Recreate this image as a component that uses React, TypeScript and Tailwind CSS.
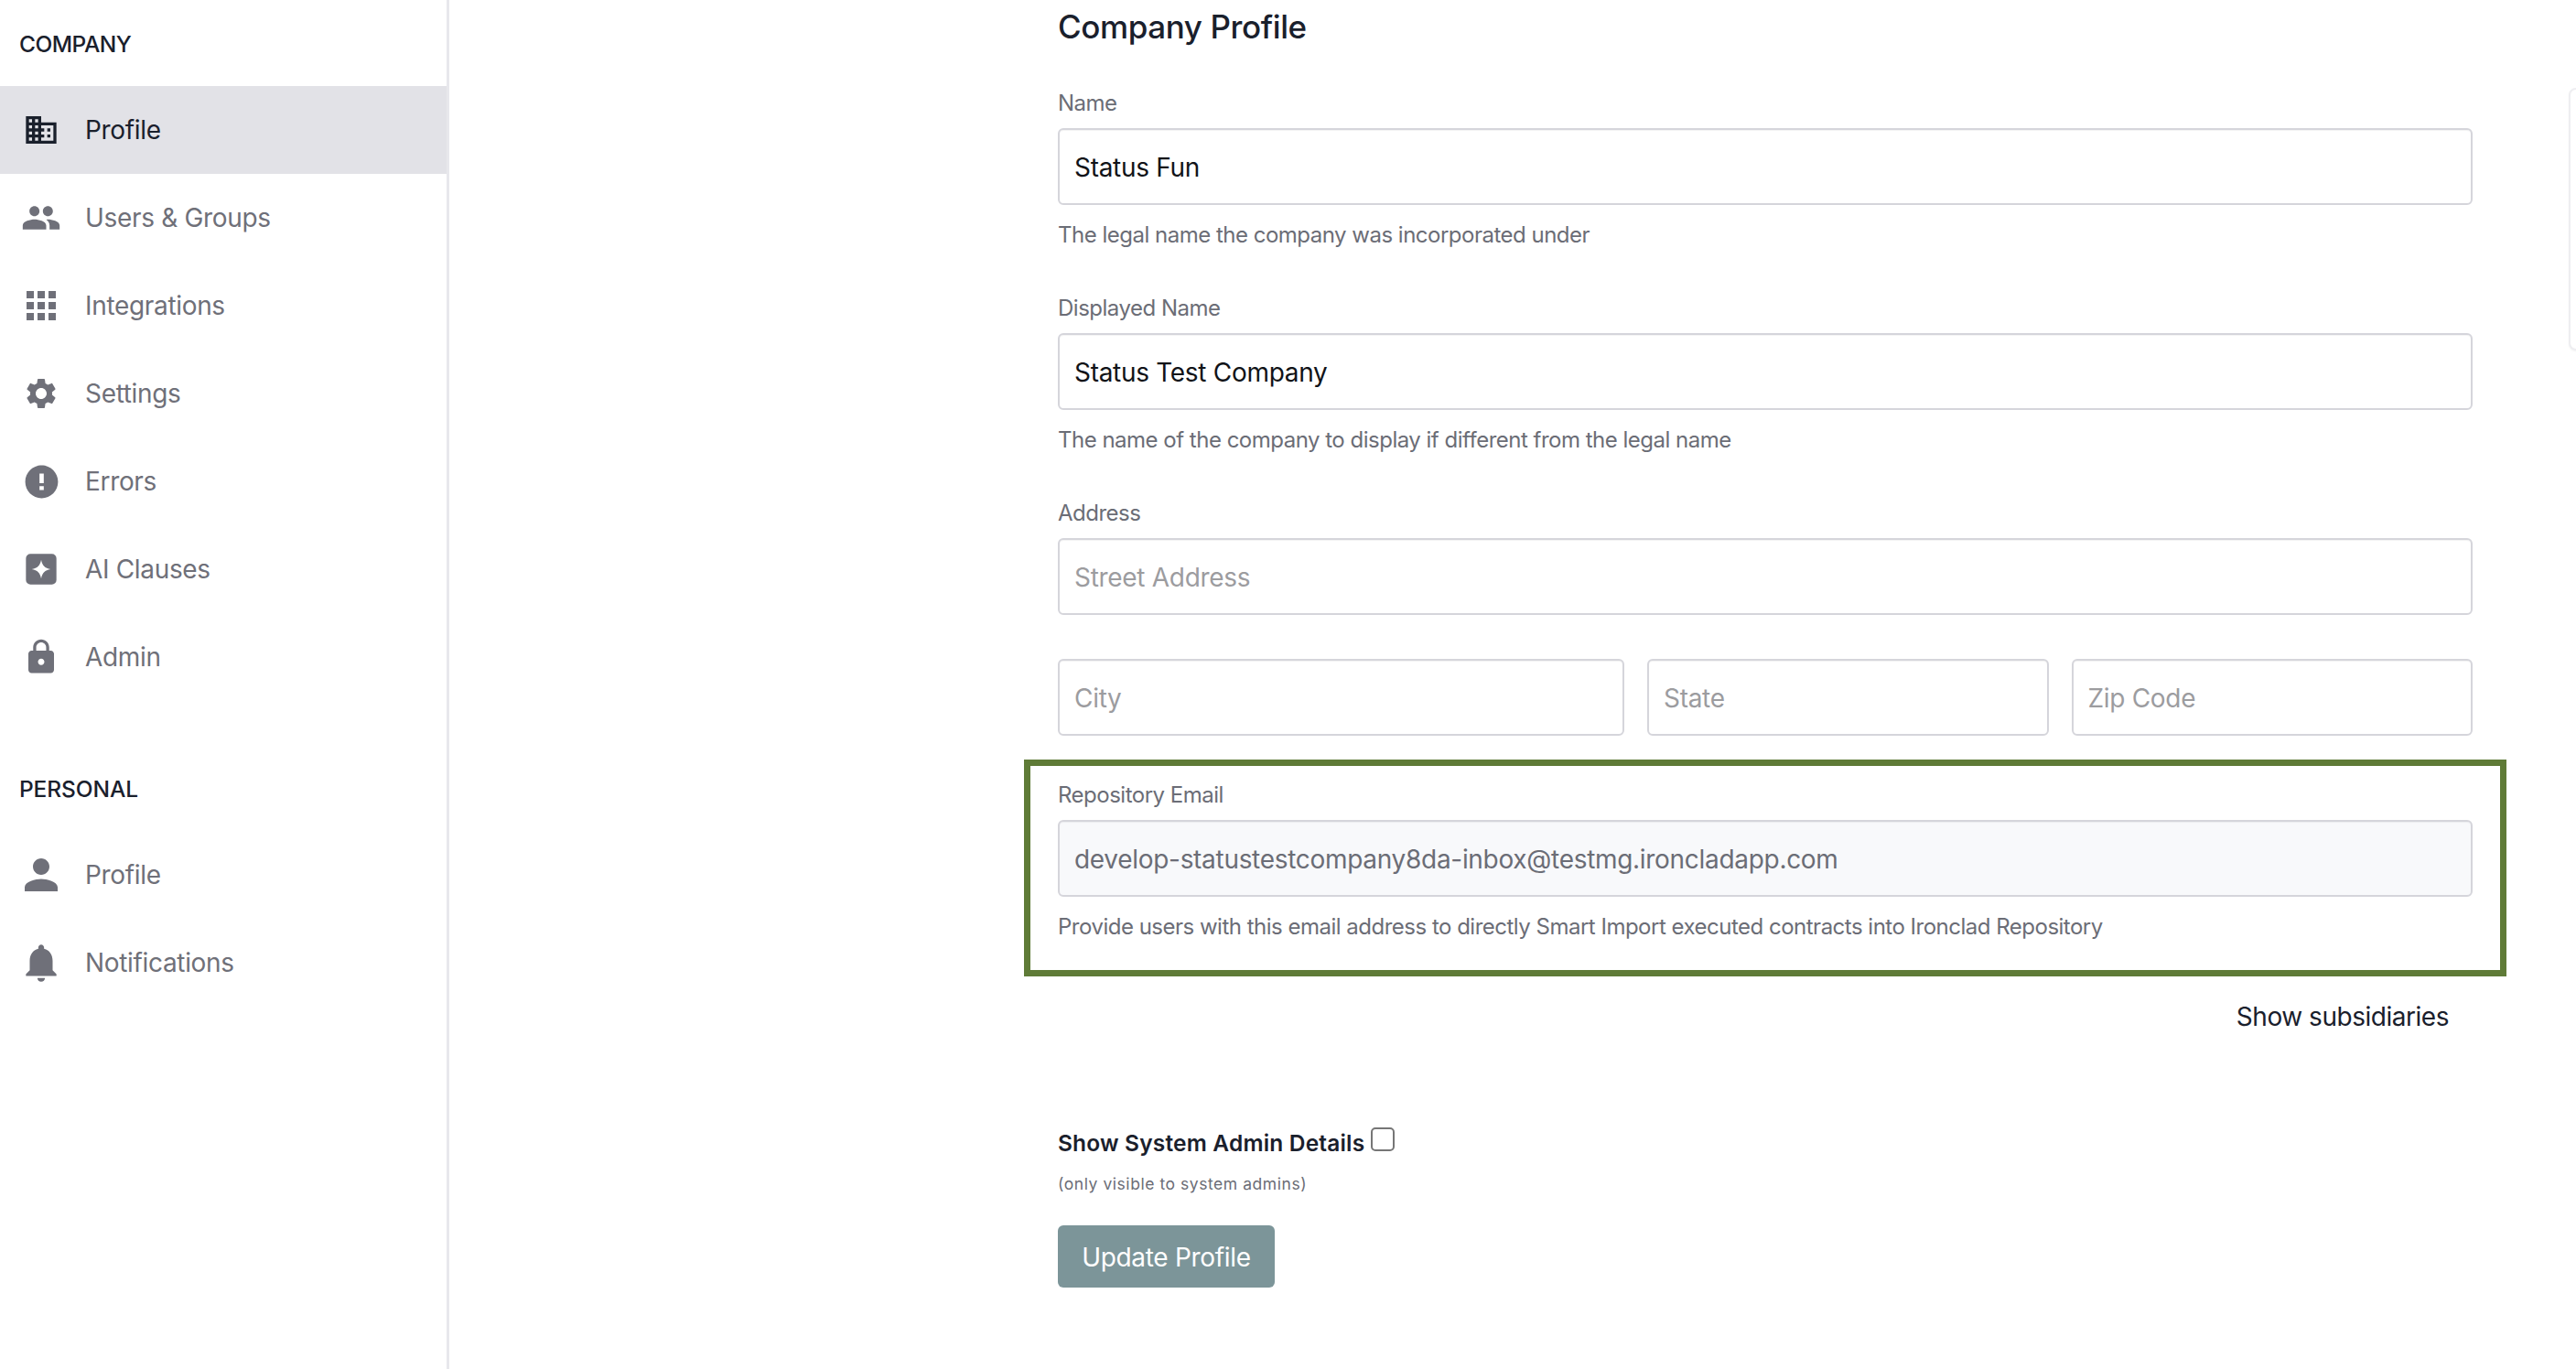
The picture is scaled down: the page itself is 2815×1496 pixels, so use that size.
const paths = {
  domain: "M12 7V3H2v18h20V7H12zM6 19H4v-2h2v2zm0-4H4v-2h2v2zm0-4H4V9h2v2zm0-4H4V5h2v2zm4 12H8v-2h2v2zm0-4H8v-2h2v2zm0-4H8V9h2v2zm0-4H8V5h2v2zm10 12h-8v-2h2v-2h-2v-2h2v-2h-2V9h8v10zm-2-8h-2v2h2v-2zm0 4h-2v2h2v-2z",
  people: "M16 11c1.66 0 2.99-1.34 2.99-3S17.66 5 16 5c-1.66 0-3 1.34-3 3s1.34 3 3 3zm-8 0c1.66 0 2.99-1.34 2.99-3S9.66 5 8 5C6.34 5 5 6.34 5 8s1.34 3 3 3zm0 2c-2.33 0-7 1.17-7 3.5V19h14v-2.5c0-2.33-4.67-3.5-7-3.5zm8 0c-.29 0-.62.02-.97.05 1.16.84 1.97 1.97 1.97 3.45V19h6v-2.5c0-2.33-4.67-3.5-7-3.5z",
  apps: "M4 8h4V4H4v4zm6 12h4v-4h-4v4zm-6 0h4v-4H4v4zm0-6h4v-4H4v4zm6 0h4v-4h-4v4zm6-10v4h4V4h-4zm-6 4h4V4h-4v4zm6 6h4v-4h-4v4zm0 6h4v-4h-4v4z",
  settings: "M19.14 12.94c.04-.3.06-.61.06-.94 0-.32-.02-.64-.07-.94l2.03-1.58c.18-.14.23-.41.12-.61l-1.92-3.32c-.12-.22-.37-.29-.59-.22l-2.39.96c-.5-.38-1.03-.7-1.62-.94l-.36-2.54c-.04-.24-.24-.41-.48-.41h-3.84c-.24 0-.43.17-.47.41l-.36 2.54c-.59.24-1.13.57-1.62.94l-2.39-.96c-.22-.08-.47 0-.59.22L2.74 8.87c-.12.21-.08.47.12.61l2.03 1.58c-.05.3-.09.63-.09.94s.02.64.07.94l-2.03 1.58c-.18.14-.23.41-.12.61l1.92 3.32c.12.22.37.29.59.22l2.39-.96c.5.38 1.03.7 1.62.94l.36 2.54c.05.24.24.41.48.41h3.84c.24 0 .44-.17.47-.41l.36-2.54c.59-.24 1.13-.56 1.62-.94l2.39.96c.22.08.47 0 .59-.22l1.92-3.32c.12-.22.07-.47-.12-.61l-2.01-1.58zM12 15.6c-1.98 0-3.6-1.62-3.6-3.6s1.62-3.6 3.6-3.6 3.6 1.62 3.6 3.6-1.62 3.6-3.6 3.6z",
  error: "M12 2C6.48 2 2 6.48 2 12s4.48 10 10 10 10-4.48 10-10S17.52 2 12 2zm1.3 15h-2.6v-2.4h2.6V17zm0-4.2h-2.6V7h2.6v5.8z",
  clause: "M5 2h14a3 3 0 0 1 3 3v14a3 3 0 0 1-3 3H5a3 3 0 0 1-3-3V5a3 3 0 0 1 3-3zm7 3.8c-.7 3.8-2.4 5.5-6.2 6.2 3.8.7 5.5 2.4 6.2 6.2.7-3.8 2.4-5.5 6.2-6.2-3.8-.7-5.5-2.4-6.2-6.2z",
  lock: "M18 8h-1V6c0-2.76-2.24-5-5-5S7 3.24 7 6v2H6c-1.1 0-2 .9-2 2v10c0 1.1.9 2 2 2h12c1.1 0 2-.9 2-2V10c0-1.1-.9-2-2-2zm-6 9c-1.1 0-2-.9-2-2s.9-2 2-2 2 .9 2 2-.9 2-2 2zm3.1-9H8.9V6c0-1.71 1.39-3.1 3.1-3.1 1.71 0 3.1 1.39 3.1 3.1v2z",
  person: "M12 12c2.21 0 4-1.79 4-4s-1.79-4-4-4-4 1.79-4 4 1.79 4 4 4zm0 2c-2.67 0-8 1.34-8 4v2h16v-2c0-2.66-5.33-4-8-4z",
  bell: "M12 22c1.1 0 2-.9 2-2h-4c0 1.1.89 2 2 2zm6-6v-5c0-3.07-1.64-5.64-4.5-6.32V4c0-.83-.67-1.5-1.5-1.5s-1.5.67-1.5 1.5v.68C7.63 5.36 6 7.92 6 11v5l-2 2v1h16v-1l-2-2z",
}

const NavItem = ({ icon, size, label, active }: { icon: string; size: string; label: string; active?: boolean }) => {
  return (
    <div className={`flex h-[96px] items-center pl-[25px] ${active ? "bg-[#e2e2e7] text-[#1a202c]" : "text-[#6f7079]"}`}>
      <div className="flex w-[40px] shrink-0 items-center justify-center">
        <svg viewBox="0 0 24 24" fill="currentColor" className={`shrink-0 ${size}`}>
          <path d={icon} />
        </svg>
      </div>
      <span className="ml-[28px] text-[28px] leading-[36px] tracking-[-0.33px]">{label}</span>
    </div>
  )
}

const Field = ({ value, placeholder, muted }: { value?: string; placeholder?: string; muted?: boolean }) => {
  return (
    <input
      readOnly
      defaultValue={value}
      placeholder={placeholder}
      className={`block h-[84px] w-full rounded-[6px] border-2 border-[#d5d5db] pl-[16px] pt-[2px] text-[28px] tracking-[-0.3px] shadow-[inset_0_1px_1px_#0000000d] outline-none placeholder:text-[#9c9c9f] ${
        muted ? "bg-[#f8f9fb] text-[#6b6d76]" : "bg-white text-[#111318]"
      }`}
    />
  )
}

const Label = ({ children, className = "" }: { children: string; className?: string }) => {
  return <div className={`text-[24px] leading-[36px] tracking-[-0.5px] text-[#6b6d76] ${className}`}>{children}</div>
}

const App = () => {
  return (
    <div className="relative flex h-[1496px] overflow-hidden bg-white font-['Inter',sans-serif]">
      <aside className="h-full w-[491px] shrink-0 border-r-[3px] border-[#e8e8ec] pt-[30px]">
        <div className="mb-[28px] pl-[21px] text-[24.5px] font-medium leading-[36px] tracking-[-0.5px] text-[#1a202c]">COMPANY</div>
        <NavItem icon={paths.domain} size="w-[40px] h-[40px]" label="Profile" active />
        <NavItem icon={paths.people} size="w-[44px] h-[44px]" label="Users & Groups" />
        <NavItem icon={paths.apps} size="w-[48px] h-[48px]" label="Integrations" />
        <NavItem icon={paths.settings} size="w-[40px] h-[40px]" label="Settings" />
        <NavItem icon={paths.error} size="w-[43px] h-[43px]" label="Errors" />
        <NavItem icon={paths.clause} size="w-[40px] h-[40px]" label="AI Clauses" />
        <NavItem icon={paths.lock} size="w-[42px] h-[42px]" label="Admin" />
        <div className="mb-[28px] mt-[78px] pl-[21px] text-[24.5px] font-medium leading-[36px] tracking-[-0.1px] text-[#1a202c]">PERSONAL</div>
        <NavItem icon={paths.person} size="w-[54px] h-[54px]" label="Profile" />
        <NavItem icon={paths.bell} size="w-[50px] h-[50px]" label="Notifications" />
      </aside>

      <main className="flex-1 pl-[665px] pt-[7px]">
        <div className="w-[1546px]">
          <h1 className="text-[35px] font-medium leading-[44px] tracking-[-0.4px] text-[#1a202c]">Company Profile</h1>

          <Label className="mb-[9px] mt-[44px]">Name</Label>
          <Field value="Status Fun" />
          <Label className="mt-[15px]">The legal name the company was incorporated under</Label>

          <Label className="mb-[9px] mt-[44px]">Displayed Name</Label>
          <Field value="Status Test Company" />
          <Label className="mt-[15px]">The name of the company to display if different from the legal name</Label>

          <Label className="mb-[9px] mt-[44px]">Address</Label>
          <Field placeholder="Street Address" />
          <div className="mt-[48px] grid grid-cols-[619px_1fr_1fr] gap-[25px]">
            <Field placeholder="City" />
            <Field placeholder="State" />
            <Field placeholder="Zip Code" />
          </div>

          <section className="-mx-[37px] mt-[26px] border-[7px] border-[#5f7b37] px-[30px] pb-[29px] pt-[14px]">
            <Label className="mb-[9px]">Repository Email</Label>
            <Field value="develop-statustestcompany8da-inbox@testmg.ironcladapp.com" muted />
            <Label className="mt-[15px]">Provide users with this email address to directly Smart Import executed contracts into Ironclad Repository</Label>
          </section>

          <div className="mt-[26px] flex justify-end pr-[26px] text-[28px] leading-[36px] tracking-[-0.47px] text-[#1a202c]">Show subsidiaries</div>

          <div className="mt-[102px] flex items-start">
            <span className="text-[24.5px] font-semibold leading-[36px] tracking-[0.18px] text-[#1a202c]">Show System Admin Details</span>
            <input type="checkbox" className="ml-[7px] mt-[1px] h-[26px] w-[26px] appearance-none rounded-[5px] border-2 border-[#767676] bg-white" />
          </div>
          <div className="mt-[13px] text-[17.5px] leading-[28px] tracking-[0.55px] text-[#6b6d76]">(only visible to system admins)</div>

          <button className="mt-[31px] h-[68px] w-[237px] rounded-[6px] bg-[#7c9599] pt-[2px] text-[28px] tracking-[-0.3px] text-white">Update Profile</button>
        </div>
      </main>

      <div className="absolute left-[2807px] top-[96px] h-[287px] w-[40px] rounded-l-[8px] border-2 border-[#eeeef1] bg-white shadow-[0_1px_2px_#0000000d]" />
    </div>
  )
}

export default App
